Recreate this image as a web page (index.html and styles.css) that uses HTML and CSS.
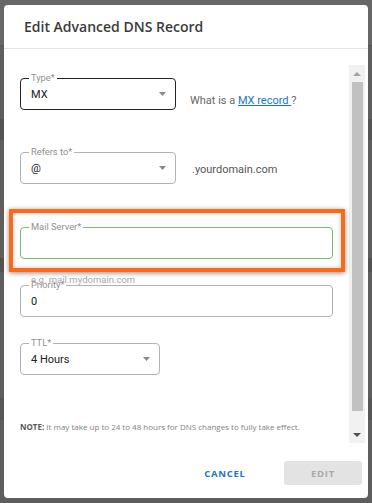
FILE: index.html
```html
<!doctype html>
<html>
<head>
<meta charset="utf-8">
<title>Edit Advanced DNS Record</title>
<link rel="stylesheet" href="styles.css">
</head>
<body>
<div class="backdrop">
  <div class="dialog">
    <div class="dialog-head">Edit Advanced DNS Record</div>

    <div class="dialog-body">
      <div class="form">
        <div class="row row-type">
          <div class="field field-dark w-select">
            <span class="field-label">Type*</span>
            <span class="field-value">MX</span>
            <svg class="caret" width="7" height="4" viewBox="0 0 7 4"><path d="M0 0h7L3.5 4z"/></svg>
          </div>
          <div class="aside aside-low">What is a <a href="#">MX record </a>?</div>
        </div>

        <div class="row row-refers">
          <div class="field w-select">
            <span class="field-label">Refers to*</span>
            <span class="field-value">@</span>
            <svg class="caret" width="7" height="4" viewBox="0 0 7 4"><path d="M0 0h7L3.5 4z"/></svg>
          </div>
          <div class="aside aside-mid">.yourdomain.com</div>
        </div>

        <div class="mark-wrap">
          <div class="field field-green">
            <span class="field-label">Mail Server*</span>
            <span class="field-value"></span>
          </div>
          <div class="mark"></div>
        </div>
        <div class="helper">e.g. mail.mydomain.com</div>

        <div class="field field-priority">
          <span class="field-label">Priority*</span>
          <span class="field-value">0</span>
        </div>

        <div class="field w-ttl field-ttl">
          <span class="field-label">TTL*</span>
          <span class="field-value">4 Hours</span>
          <svg class="caret" width="7" height="4" viewBox="0 0 7 4"><path d="M0 0h7L3.5 4z"/></svg>
        </div>

        <p class="note"><b>NOTE:</b> It may take up to 24 to 48 hours for DNS changes to fully take effect.</p>
      </div>

      <div class="scrollbar">
        <div class="sb-btn"><svg width="8" height="4" viewBox="0 0 8 4"><path d="M0 4h8L4 0z" fill="#a3a3a3"/></svg></div>
        <div class="sb-track"><div class="sb-thumb"></div></div>
        <div class="sb-btn"><svg width="8" height="4" viewBox="0 0 8 4"><path d="M0 0h8L4 4z" fill="#505050"/></svg></div>
      </div>
    </div>

    <div class="dialog-foot">
      <button class="btn btn-text">CANCEL</button>
      <button class="btn btn-disabled">EDIT</button>
    </div>
  </div>
</div>
</body>
</html>
```

FILE: styles.css
```css
body {
  margin: 0;
  font-family: Roboto, "Liberation Sans", sans-serif;
}

.backdrop {
  height: 503px;
  padding: 5px 4px;
  box-sizing: border-box;
  background: linear-gradient(#676767 0, #676767 45px, #4f4f4f 45px, #5e5e5e 46px,
    #5e5e5e 119px, #545454 119px, #545454 140px, #5e5e5e 140px,
    #5e5e5e 258px, #525252 258px, #525252 272px, #5e5e5e 272px,
    #5e5e5e 398px, #565656 398px, #565656 420px, #5e5e5e 420px);
}

.dialog {
  width: 364px;
  height: 493px;
  background: #fff;
  border-radius: 4px;
  display: flex;
  flex-direction: column;
  overflow: hidden;
}

.dialog-head {
  height: 43px;
  flex: none;
  display: flex;
  align-items: center;
  padding-left: 20px;
  border-bottom: 1px solid #e3e3e3;
  font-family: "Open Sans", sans-serif;
  font-weight: 600;
  font-size: 14px;
  color: #3b3b3b;
}

.dialog-body {
  height: 394px;
  flex: none;
  display: flex;
  padding: 16px 3px 0 16px;
  box-sizing: border-box;
}

.form {
  flex: 1;
  padding-right: 16px;
}

.row {
  display: flex;
  align-items: center;
}
.row-type { margin-top: 13px; }
.row-refers { margin-top: 42px; }

.aside {
  font-size: 11px;
  color: #666;
}
.aside-low {
  margin-left: 14px;
  margin-top: 13px;
}
.aside-mid {
  margin-left: 16px;
  margin-top: 3px;
  color: #555;
}
.aside a {
  color: #1b74cc;
}

.field {
  position: relative;
  height: 32px;
  box-sizing: border-box;
  border: 1px solid #b3b3b3;
  border-radius: 4px;
  display: flex;
  align-items: center;
  padding: 0 10px;
}
.field-dark { border-color: #232323; }
.field-green { border-color: #72bd75; }
.w-select { width: 156px; }
.w-ttl { width: 140px; }

.field-label {
  position: absolute;
  top: -6px;
  left: 8px;
  padding: 0 2px;
  background: #fff;
  font-size: 9.3px;
  line-height: 10px;
  color: #909090;
}

.field-value {
  flex: 1;
  font-size: 11px;
  color: #222;
}

.caret {
  fill: #8a8a8a;
  margin-right: -1px;
}

.mark-wrap {
  position: relative;
  margin-top: 43px;
}
.mark {
  position: absolute;
  top: -18px;
  left: -11px;
  right: -12px;
  bottom: -13px;
  border: 4px solid #fd6a17;
  box-shadow: 0 1px 5px rgba(0, 0, 0, 0.45), inset 0 0 4px rgba(0, 0, 0, 0.25);
  pointer-events: none;
}

.helper {
  position: relative;
  z-index: 1;
  margin-top: 15px;
  padding-left: 11px;
  font-size: 9.5px;
  line-height: 12px;
  color: #a8a8a8;
}

.field-priority { margin-top: -1px; }
.field-ttl { margin-top: 26px; }

.note {
  margin: 46px 0 0;
  font-family: "Open Sans", sans-serif;
  font-size: 8px;
  line-height: 11px;
  color: #808080;
}
.note b { color: #5a5a5a; }

.scrollbar {
  width: 16px;
  flex: none;
  background: #f1f1f1;
  display: flex;
  flex-direction: column;
}
.sb-btn {
  height: 17px;
  display: flex;
  align-items: center;
  justify-content: center;
}
.sb-track {
  flex: 1;
  padding: 0 2px 0 3px;
}
.sb-thumb {
  height: 329px;
  background: #c1c1c1;
}

.dialog-foot {
  flex: 1;
  display: flex;
  align-items: center;
  justify-content: flex-end;
  gap: 20px;
  padding: 5px 6px 0 0;
}

.btn {
  width: 78px;
  height: 24px;
  border: 0;
  border-radius: 3px;
  font-family: "Open Sans", sans-serif;
  font-weight: 700;
  font-size: 9.5px;
  letter-spacing: 0.7px;
  background: none;
}
.btn-text { color: #1c75cc; }
.btn-disabled {
  background: #e3e3e3;
  color: #a9a9a9;
}
```
